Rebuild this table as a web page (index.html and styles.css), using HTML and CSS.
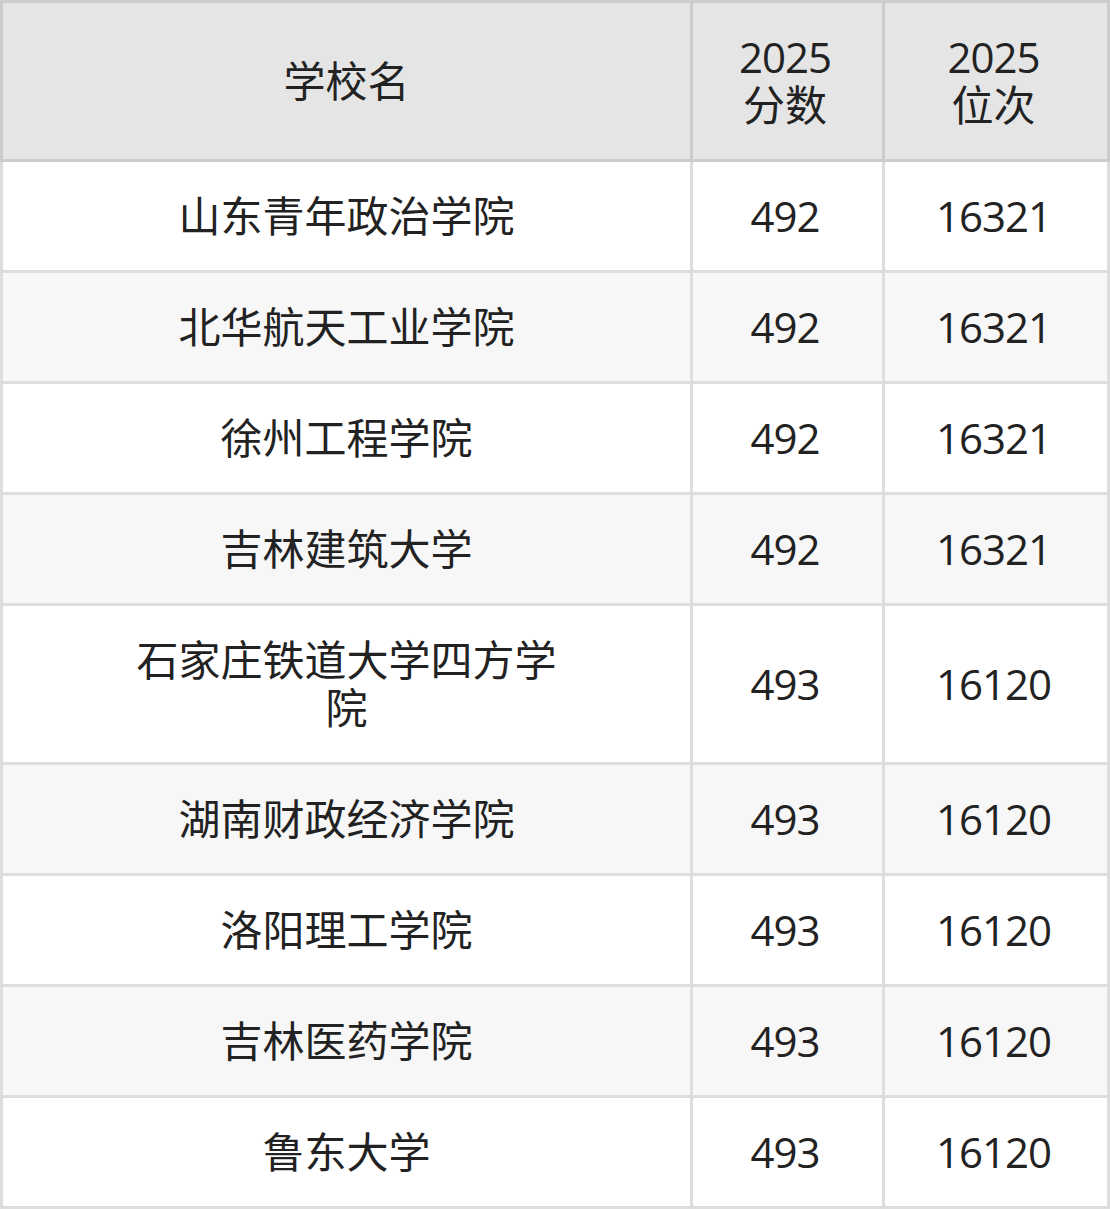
FILE: index.html
```html
<!DOCTYPE html>
<html lang="zh-CN">
<head>
<meta charset="utf-8">
<title>分数位次</title>
<link rel="stylesheet" href="styles.css">
</head>
<body>
<div class="table">
  <div class="grid head">
    <div class="cell name">学校名</div>
    <div class="cell"><span class="num">2025</span><br>分数</div>
    <div class="cell"><span class="num">2025</span><br>位次</div>
  </div>
  <div class="grid body">
    <div class="cell name">山东青年政治学院</div><div class="cell num">492</div><div class="cell num">16321</div>
    <div class="cell name alt">北华航天工业学院</div><div class="cell num alt">492</div><div class="cell num alt">16321</div>
    <div class="cell name">徐州工程学院</div><div class="cell num">492</div><div class="cell num">16321</div>
    <div class="cell name alt">吉林建筑大学</div><div class="cell num alt">492</div><div class="cell num alt">16321</div>
    <div class="cell name">石家庄铁道大学四方学院</div><div class="cell num">493</div><div class="cell num">16120</div>
    <div class="cell name alt">湖南财政经济学院</div><div class="cell num alt">493</div><div class="cell num alt">16120</div>
    <div class="cell name">洛阳理工学院</div><div class="cell num">493</div><div class="cell num">16120</div>
    <div class="cell name alt">吉林医药学院</div><div class="cell num alt">493</div><div class="cell num alt">16120</div>
    <div class="cell name">鲁东大学</div><div class="cell num">493</div><div class="cell num">16120</div>
  </div>
</div>
</body>
</html>
```

FILE: styles.css
```css
html, body {
  margin: 0;
  padding: 0;
  background: #ffffff;
}

.table {
  width: 1110px;
  font-family: "Open Sans", "Noto Sans CJK SC", sans-serif;
  font-size: 42px;
  line-height: 48px;
  color: #222222;
}

.grid {
  display: grid;
  grid-template-columns: 687px 189px 222px;
  column-gap: 3px;
  row-gap: 3px;
}

.head {
  background: #cccccc;
  padding: 3px;
}

.body {
  background: #dddddd;
  padding: 0 3px 3px;
}

.cell {
  background: #ffffff;
  padding: 30px 11px 30px 6px;
  text-align: center;
  display: flex;
  flex-direction: column;
  align-items: center;
  justify-content: center;
}

.head .cell {
  display: block;
  background: #e5e5e5;
}

.head .cell.name {
  display: flex;
}

.cell.alt {
  background: #f7f7f7;
}

.cell.name {
  padding-left: 122px;
  padding-right: 122px;
}

.num {
  letter-spacing: -1px;
}
```
